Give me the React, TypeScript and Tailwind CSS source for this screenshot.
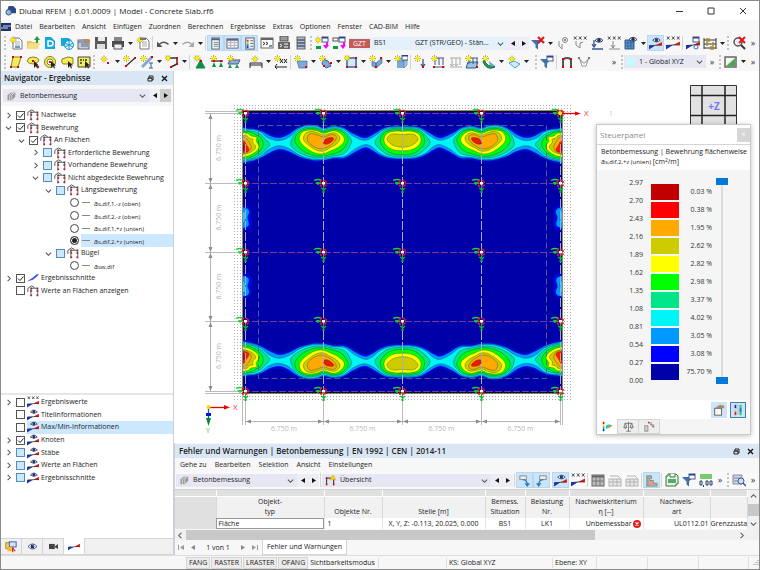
import type { ReactNode } from "react";

type Pt = [number, number];

// ---------- small drawing helpers ----------

function smooth(points: Pt[]) {
  const n = points.length;
  let d = `M${points[0][0]} ${points[0][1]}`;
  for (let i = 0; i < n; i++) {
    const p0 = points[(i - 1 + n) % n];
    const p1 = points[i];
    const p2 = points[(i + 1) % n];
    const p3 = points[(i + 2) % n];
    const c1 = [p1[0] + (p2[0] - p0[0]) / 6, p1[1] + (p2[1] - p0[1]) / 6];
    const c2 = [p2[0] - (p3[0] - p1[0]) / 6, p2[1] - (p3[1] - p1[1]) / 6];
    d += `C${c1[0].toFixed(1)} ${c1[1].toFixed(1)} ${c2[0].toFixed(1)} ${c2[1].toFixed(1)} ${p2[0]} ${p2[1]}`;
  }
  return d + "Z";
}

const Star = ({ x = 3.5, y = 3.5 }: { x?: number; y?: number }) => (
  <g transform={`translate(${x} ${y})`}>
    <path d="M-3.5 0h7M0-3.5v7M-2.3-2.3l4.6 4.6M-2.3 2.3l4.6-4.6" stroke="#a89a20" strokeWidth=".9" />
    <circle r="2" fill="#ffee00" />
  </g>
);

const Dot = ({ x, y, c = "#e00000" }: { x: number; y: number; c?: string }) => (
  <rect x={x - 1} y={y - 1} width="2" height="2" fill={c} />
);

const Eye = ({ x = 8, y = 3 }: { x?: number; y?: number }) => (
  <g transform={`translate(${x} ${y})`}>
    <path d="M-4 .5Q0-4 4 .5Q0 4-4 .5Z" fill="#fff" stroke="#1d2c63" strokeWidth=".9" />
    <circle cy=".3" r="1.7" fill="#1d2c63" />
  </g>
);

const Xxx = ({ y = 3 }: { y?: number }) => (
  <path
    d={`M1 ${y - 1.5}l2.5 3m0-3l-2.5 3M6 ${y - 1.5}l2.5 3m0-3l-2.5 3M11 ${y - 1.5}l2.5 3m0-3l-2.5 3`}
    stroke="#333"
    strokeWidth=".9"
  />
);

const Wedge = () => (
  <>
    <path d="M0 13.500V9L7 9Z" fill="#1733c8" />
    <path d="M7 9L14 5.500V9.500Z" fill="#e02020" />
    <path d="M1 9.500L13 8.500" stroke="#333" strokeWidth=".8" />
  </>
);

const Funnel = ({ c = "#3f6fae" }: { c?: string }) => <path d="M0 4h11L7 8.500v5L4.500 11.500v-3Z" fill={c} />;

const Win = ({ x = 7, y = 1 }: { x?: number; y?: number }) => (
  <>
    <rect x={x} y={y} width="6" height="5" fill="#fff" stroke="#4a5a80" />
    <rect x={x} y={y} width="6" height="1.500" fill="#2a3e9a" />
  </>
);

const Frame = ({ c = "#b02030" }: { c?: string }) => (
  <>
    <path d="M4.500 13V4h8v9" fill="none" stroke="#8a8a8a" strokeWidth="1.500" />
    <path d="M1 4v4M1 4l4-3 4 2" stroke="#444" fill="none" />
    <Dot x={5} y={4} c="#444" />
    <Dot x={12} y={4} c="#444" />
    <Dot x={5} y={7} c={c} />
    <Dot x={12} y={7} c={c} />
    <Dot x={5} y={12} c={c} />
    <Dot x={12} y={12} c={c} />
  </>
);

const Page = () => (
  <>
    <path d="M4 2h6l3 3v8H4Z" fill="#fff" stroke="#777" />
    <path d="M6 6h5M6 8h5M6 10h5" stroke="#aaa" />
  </>
);

const Poly = ({ d }: { d: string }) => <path d={d} fill="#f3ec5c" stroke="#8b8419" />;

const Cursor = () => <path d="M8 6v7l2-2 1 2.500 1-.5-1-2.500h2Z" fill="#222" />;

const glyphs: Record<string, ReactNode> = {
  new: (<><Page /><Star x={4} y={4} /><path d="M6 10h5v2H6z" fill="#6a9bc8" /></>),
  open: (<><path d="M1 5h4l1 1h6v7H1Z" fill="#e5c55d" /><path d="M1 13l2-6h11l-2 6Z" fill="#f5dd87" /><path d="M10 7V4H8l3-4 3 4h-2v3Z" fill="#249b35" /></>),
  dCloud: (<><path d="M2 1h6l4 4v8H2Z" fill="#12a8dc" /><path d="M5 5h2q3 0 3 2.500T7 10H5Z" fill="none" stroke="#fff" strokeWidth="1.500" /></>),
  dCube: (<><path d="M1 2h7q4 1 4 5v3H1Z" fill="#12a8dc" /><circle cx="9" cy="9" r="4.500" fill="#dff4fc" stroke="#1598cc" /><path d="M9 5v8M5 7l8 4M5 11l8-4" stroke="#1598cc" /></>),
  props: (<><rect x="1" y="4" width="11" height="9" fill="#c8cfd8" stroke="#667" /><path d="M1 6h11M4 8h7M4 10h7" stroke="#556b8c" /><path d="M6 3h5l2 1v3H9Z" fill="#b78a5c" /></>),
  save: (<><path d="M1 1h12v12H1Z" fill="#5a5a5a" /><rect x="4" y="1" width="7" height="4" fill="#eee" /><rect x="3" y="8" width="8" height="5" fill="#ddd" /></>),
  print: (<><rect x="3" y="1" width="8" height="4" fill="#888" /><path d="M1 5h12v6H1Z" fill="#4c4c4c" /><rect x="3" y="8" width="8" height="5" fill="#eee" stroke="#555" /></>),
  report: (<><Page /><Star x={4} y={4} /><path d="M4 2h6v2H4z" fill="#777" /></>),
  undo: (<><path d="M3 8.500Q7.500 4 12.500 8.500" fill="none" stroke="#555" strokeWidth="1.600" /><path d="M1 5.500V11h5.500Z" fill="#555" /></>),
  redo: (<><path d="M11 8.500Q6.500 4 1.500 8.500" fill="none" stroke="#aaa" strokeWidth="1.400" /><path d="M13 5.500V11H7.500Z" fill="#aaa" /></>),
  navTable: (<><rect x="3" y="1" width="8" height="12" fill="#f4f4f4" stroke="#55606e" /><path d="M3 2.500h8" stroke="#55606e" strokeWidth="2" /><path d="M5 6h5M5 8h5M5 10h5" stroke="#6b87ad" /></>),
  grid: (<><rect x="1" y="2" width="12" height="10" fill="#f4f4f4" stroke="#667" /><path d="M1 3h12" stroke="#667" strokeWidth="2" /><path d="M1 6h12M1 9h12M5 4v8M9 4v8" stroke="#b0b4bc" /></>),
  legend: (<><rect x="3" y="1" width="9" height="12" fill="#f1f1f1" stroke="#55606e" /><path d="M5 3v2" stroke="#e22" strokeWidth="2" /><path d="M5 5v2" stroke="#fb3" strokeWidth="2" /><path d="M5 7v2" stroke="#2c3" strokeWidth="2" /><path d="M5 9v3" stroke="#23e" strokeWidth="2" /><path d="M8 4h3M8 7h3M8 10h3" stroke="#3a68a8" /></>),
  console: (<><rect x="1" y="2" width="12" height="10" fill="#fff" stroke="#666" /><path d="M1 3h12" stroke="#666" strokeWidth="2" /><path d="M3 6l2 1.500L3 9M6 6l2 1.500L6 9M9 10h3" fill="none" stroke="#222" /></>),
  script: (<><rect x="3" y="0" width="8" height="5" fill="#999" stroke="#555" /><rect x="1" y="6" width="12" height="7" fill="#666" /><path d="M3 8l2 1.500L3 11M7 8h4M7 11h4" stroke="#fff" fill="none" /></>),
  panel: (<><rect x="3" y="1" width="8" height="12" fill="#aebfd4" stroke="#666" /><path d="M3 4h8M3 7h8M3 10h8" stroke="#556" strokeWidth="1.500" /></>),
  swapNew: (<><path d="M1 10h5v3H1z" fill="#0a9b3c" /><Win x={7} y={1} /><Star x={3} y={4} /><path d="M12 6v4" stroke="#f0f" strokeWidth="2" /><path d="M8 9h6l-3 4Z" fill="#f0f" /></>),
  swap: (<><rect x="1" y="2" width="5" height="3" fill="#fff" stroke="#555" /><path d="M1 10h5v3H1z" fill="#0a9b3c" /><Win x={7} y={1} /><path d="M12 6v4" stroke="#f0f" strokeWidth="2" /><path d="M8 9h6l-3 4Z" fill="#f0f" /></>),
  filterX: (<><Funnel /><path d="M7 1l6 6m0-6L7 7" stroke="#e01818" strokeWidth="2.200" /></>),
  ptEye: (<><path d="M3 5v5l3 3V8" fill="none" stroke="#888" /><circle cx="9" cy="4" r="2.500" fill="none" stroke="#888" /><circle cx="9" cy="4" r="1" fill="#666" /></>),
  ptXxx: (<><Xxx y={2} /><path d="M3 5v4l4 3V7l3-1" fill="none" stroke="#888" /></>),
  loadEye: (<><path d="M2 13h11" stroke="#35588e" strokeWidth="1.500" /><path d="M4 4v7M2 8l2 3 2-3" fill="none" stroke="#35588e" strokeWidth="1.300" /><Eye x={9} y={4} /></>),
  loadXxx: (<><Xxx y={2} /><path d="M2 13h11M6 5v7M4 9l2 3 2-3" fill="none" stroke="#888" /></>),
  meshEye: (<><path d="M1 4h9v9H1z" fill="#5e94cc" stroke="#2d5790" /><path d="M1 7h9M1 10h9M4 4v9M7 4v9" stroke="#2d5790" strokeWidth=".7" /><Eye x={9} /></>),
  resEye: (<><Wedge /><Eye x={8} /></>),
  resXxx: (<><Wedge /><Xxx y={2} /></>),
  resWin: (<><Wedge /><Win /><circle cx="10" cy="11" r="2" fill="#fff" stroke="#36c" /></>),
  res: (<><path d="M0 12V8L7 8Z" fill="#1733c8" /><path d="M7 8L14 4.500V8.500Z" fill="#e02020" /><path d="M1 8.500L13 7.500" stroke="#333" strokeWidth=".7" /></>),
  abacus: (<><path d="M1 2v11M13 2v11M1 4h12M1 8h12M1 12h12" stroke="#333" /><path d="M4 2v4M6 2v4M4 6v4M10 6v4M8 10v4M10 10v4" stroke="#a88a2a" strokeWidth="1.500" /></>),
  searchX: (<><circle cx="6" cy="6" r="4" fill="#eef" stroke="#555" strokeWidth="1.500" /><path d="M9 9l4 4" stroke="#333" strokeWidth="2" /><path d="M7 1l6 6m0-6L7 7" stroke="#e01818" strokeWidth="2" /></>),
  poly1: (<><Poly d="M4 2h8L9 12H2Z" /><Dot x={4} y={2} /><Dot x={12} y={2} /><Dot x={2} y={12} /><Dot x={9} y={12} /></>),
  poly2: (<><Poly d="M1 6q1-4 6-4t6 3q0 3-6 4q-4 0-6-3Z" /><Dot x={7} y={6} /><Cursor /><Dot x={12} y={12} /></>),
  poly3: (<><circle cx="7" cy="7" r="5.500" fill="#f3ec5c" stroke="#8b8419" /><circle cx="7" cy="7" r="3" fill="#fff" stroke="#8b8419" /><Dot x={7} y={7} /><Cursor /></>),
  poly4: (<><Poly d="M2 4l6-2 5 1v6H3Q1 8 2 4Z" /><Cursor /></>),
  poly5: (<><path d="M1 2h12v10H1Z" fill="#f3ec5c" stroke="#444" /><path d="M3 5h4M3 8h3M9 4v3" stroke="#333" strokeWidth="1.500" strokeDasharray="2 1" /><Cursor /></>),
  node: (<><Star x={6} y={4} /><Dot x={10} y={8} /></>),
  line: (<><path d="M3 11L12 3" stroke="#333" strokeWidth="1.300" /><Star /><Dot x={3} y={11} /><Dot x={12} y={3} /></>),
  member: (<><path d="M2 12L12 2" stroke="#88a8d0" strokeWidth="3" /><Star /><Dot x={12} y={2} /><path d="M9 8h4M11 8v5M9 13h4" stroke="#3960a0" /></>),
  polyline: (<><path d="M4 3h8v6l-6 3" fill="none" stroke="#333" strokeWidth="1.500" /><Star x={3} y={3} /><Dot x={12} y={3} /><Dot x={12} y={9} /><Dot x={6} y={12} /></>),
  support: (<><path d="M7 4v6M7 6l-4 7h9l-4-7Z" fill="#0b9044" stroke="#0b9044" /><Star x={4} y={3} /><Dot x={8} y={6} /></>),
  lineSup: (<><path d="M1 6h12" stroke="#333" strokeWidth="1.300" /><path d="M4 7l-2 5h4ZM11 7l-2 5h4Z" fill="#0b9044" /><Star /><Dot x={4} y={6} /><Dot x={11} y={6} /></>),
  surfSup: (<><path d="M3 5h10l-2 4H1Z" fill="#88b2d8" stroke="#557" /><path d="M3 9l-2 4h4ZM10 9l-2 4h4Z" fill="#1a9b52" /><Star /></>),
  dim: (<><path d="M1 13V8h12v5M1 10h12" fill="none" stroke="#222" /><Star x={6} y={4} /></>),
  dimXx: (<><path d="M1 12h12M3 9l-2 3 2 2" fill="none" stroke="#222" /><Star /><path d="M6 4l3 4m0-4L6 8M10 4l3 4m0-4l-3 4" stroke="#222" /></>),
  surface: (<><path d="M3 6h10v7H5Z" fill="#7daad6" stroke="#3a628e" strokeWidth=".6" /><Star /><Dot x={12} y={12} /></>),
  opening: (<><path d="M4 4l5 2 3 5-5 2-4-4Z" fill="#7daad6" stroke="#3a628e" /><Star /><Dot x={12} y={8} /><Dot x={5} y={11} /></>),
  openRect: (<><path d="M3 3h9v9H3Z" fill="#d5e6f6" stroke="#5b8ab8" strokeWidth="2" /><Star x={3} y={3} /><Dot x={12} y={3} /><Dot x={3} y={12} /><Dot x={12} y={12} /></>),
  solid: (<><path d="M3 6l4 2v5l-4-2ZM7 8l6-5v5l-6 5Z" fill="#78a6d4" stroke="#315c8c" strokeWidth=".6" /><Star /><Dot x={12} y={3} /><Dot x={7} y={12} /></>),
  cube: (<><path d="M3 6h7v7H3Z" fill="#7daad6" /><path d="M3 6l2-3h8l-3 3ZM10 6l3-3v7l-3 3Z" fill="#a6c8e8" stroke="#315c8c" strokeWidth=".5" /><Star /><Win x={8} y={0} /></>),
  load: (<><Star /><path d="M9 4v8M7 9l2 3 2-3" stroke="#35588e" fill="none" strokeWidth="1.300" /><Dot x={9} y={12} /></>),
  lineLoad: (<><path d="M2 3h11M4 3v7M8 3v7M12 3v7M2 12h12" stroke="#35588e" fill="none" /><Star /><Dot x={3} y={12} /><Dot x={12} y={12} /></>),
  lineLoadOff: <path d="M2 3h11M4 3v7M8 3v7M12 3v7M2 12h12M2 9l2 2 2-2M7 9l1 2 2-2" stroke="#aaa" fill="none" />,
  surfLoad: (<><path d="M3 7h10l-2 6H1Z" fill="#9cc2e6" stroke="#315c8c" /><path d="M4 3v6M8 3v6M12 3v6M3 3h10" stroke="#315c8c" /><Star /><Dot x={12} y={12} /></>),
  brush: (<><path d="M2 5q4 8 9 5l2 2q-8 4-12-5Z" fill="#28a05a" stroke="#17683a" /><path d="M7 6l6 5H8Z" fill="#6fa0d8" /><Star /></>),
  lamp: (<><path d="M2 8l5-2 6 3-5 4Z" fill="#d6ecfb" stroke="#3fa0d8" /><Star x={5} y={4} /></>),
  filterWin: (<><Funnel /><Win /></>),
  arch: (<><path d="M3 13V6q0-3 4-3t4 3v7" fill="none" stroke="#555" strokeWidth="2" /><Dot x={3} y={12} /><Dot x={11} y={12} /><Dot x={3} y={4} /><Dot x={11} y={4} /></>),
  cable: (<><path d="M2 2l3 9h4l3-9M3 4q4 8 8 0" fill="none" stroke="#999" /><Dot x={2} y={3} c="#777" /><Dot x={12} y={3} c="#777" /></>),
  plane: (<><rect x="1" y="2" width="11" height="10" fill="#f8f8f8" stroke="#666" strokeWidth="1.500" /><path d="M2 11L11 3v8Z" fill="#48a848" /><path d="M2 11L11 3" stroke="#b5e0b5" /></>),
  frame: <Frame />,
  cut: <path d="M0 11L6 7l5-4 3-1-2 3-5 4Z" fill="#3d56f0" />,
  steel: (<><path d="M2 6l5-4h6v6l-5 5H2Z" fill="#999" /><path d="M5 13V6l5-4M8 12V6l4-4" stroke="#eee" /></>),
  overview: (<><path d="M2 13V4h9v9" fill="none" stroke="#445" strokeWidth="1.500" /><Dot x={2} y={4} /><Dot x={2} y={12} /><Dot x={11} y={12} /><path d="M10 0l4 6H6Z" fill="#ffd11a" stroke="#b88e00" strokeWidth=".5" /></>),
  navData: (<><rect x="1" y="2" width="9" height="7" fill="#f6d25c" stroke="#a87c10" /><rect x="5" y="1" width="8" height="6" fill="#cfe2ff" stroke="#2850b0" /><path d="M3 7h7v5H3Z" fill="#f3be2e" /><path d="M9 13V8l3 4" stroke="#d22" fill="none" strokeWidth="1.300" /></>),
  eye: (<><path d="M0 7Q7-1 14 7Q7 15 0 7Z" fill="#fff" stroke="#1d2c63" strokeWidth="1.200" /><circle cx="7" cy="7" r="3" fill="#1d2c63" /><circle cx="8" cy="6" r="1" fill="#8ea2dc" /></>),
  camera: (<><rect x="0" y="3" width="9" height="8" fill="#444" /><path d="M9 7l5-4v8L9 8Z" fill="#444" /></>),
  arrowDown: (<><rect x="2" y="2" width="7" height="4" fill="#eee" stroke="#8a8a8a" /><path d="M5 6q5 0 5 6" fill="none" stroke="#2d7db8" strokeWidth="1.500" /><path d="M7 10h6l-3 4Z" fill="#2d7db8" /></>),
  arrowUp: (<><rect x="5" y="2" width="7" height="4" fill="#eee" stroke="#8a8a8a" /><path d="M9 6Q4 6 4 12" fill="none" stroke="#2d7db8" strokeWidth="1.500" /><path d="M1 10h6l-3 4Z" fill="#2d7db8" /></>),
  tableDark: (<><rect x="1" y="2" width="12" height="11" fill="#bbb" stroke="#666" /><path d="M1 3.500h12" stroke="#666" strokeWidth="2" /><path d="M1 8h12M5 5v8M9 5v8" stroke="#777" /></>),
  tableOff: (<><rect x="1" y="6" width="12" height="7" fill="#e8e8e8" stroke="#b2b2b2" /><path d="M1 9h12M5 6v7M9 6v7M2 3h8l2 2" stroke="#b2b2b2" fill="none" /></>),
  bars: (<><path d="M3 2h4v3H5v2h4v3h4v3H3Z" fill="#e49b9b" stroke="#6d9a86" /><path d="M2 1v13" stroke="#7fa596" strokeWidth="1.500" /></>),
  excel: (<><path d="M3 1h8l2 2v8h-2v2H1V3h2Z" fill="#e8f3e8" stroke="#2b7a3b" /><path d="M3 6h8v4H3z" fill="#5ba86a" /><path d="M5 1v3h5V1" fill="#fff" stroke="#2b7a3b" /></>),
  decimals: (<><path d="M1 1h12v5H1z" fill="#7bc96f" /><path d="M1 8h2v4H1zM7 8h2v4H7zM11 8h2v4h-2z" fill="none" stroke="#223a6a" /><path d="M4.500 12v2" stroke="#223a6a" /></>),
  find: (<><path d="M1 2h9v9H1z" fill="#d5dae2" stroke="#888" /><path d="M2 5h7M2 8h5" stroke="#6a86b0" /><circle cx="9" cy="8" r="3" fill="#cfe0f8" stroke="#3a5890" /><path d="M11 10l3 3" stroke="#3a5890" strokeWidth="1.500" /></>),
  scaleTab: (<><path d="M2 1v3" stroke="#e00" strokeWidth="2" /><path d="M2 4v3" stroke="#fc0" strokeWidth="2" /><path d="M2 7v3" stroke="#0c4" strokeWidth="2" /><path d="M2 10v3" stroke="#03e" strokeWidth="2" /><path d="M5 10V6q4-3 8 0l-4 3Z" fill="#0cd" /><path d="M6 8q4-3 7-2l-4 3Z" fill="#f90" /></>),
  balance: <path d="M7 1v12M2 3h10M3 3L1 8h4ZM11 3L9 8h4ZM1 8q2 3 4 0M9 8q2 3 4 0M4 13h6" fill="none" stroke="#666" />,
  nodeTab: (<><rect x="1" y="6" width="4" height="7" fill="#ccc" stroke="#888" /><path d="M6 2l6 6M9 1v4h4" stroke="#777" fill="none" /><Dot x={6} y={2} c="#d22" /><Dot x={12} y={7} c="#c55" /></>),
  handBox: (<><rect x="2" y="5" width="8" height="8" fill="#fafafa" stroke="#555" /><path d="M3 4l5-3 5 1v3H4Z" fill="#a88b6c" /></>),
  scales: (<><path d="M4 1v4" stroke="#22d" strokeWidth="2" /><path d="M4 5v4" stroke="#ccc" strokeWidth="2" /><path d="M4 9v4" stroke="#d22" strokeWidth="2" /><path d="M10 1v12" stroke="#2ad07a" strokeWidth="2.500" /><path d="M10 5v4" stroke="#3a6de0" strokeWidth="2" /><path d="M7 1v12" stroke="#89a" strokeDasharray="1 1" /></>),
};

const Glyph = ({ name, size = "size-[14px]" }: { name: string; size?: string }) => (
  <svg viewBox="0 0 14 14" className={`${size} shrink-0`} fill="none" aria-hidden="true">
    {glyphs[name]}
  </svg>
);

// ---------- toolbar parts ----------

const Tool = ({ name, on }: { name: string; on?: boolean }) => (
  <button
    aria-label={name}
    aria-pressed={on}
    className={`flex h-4 w-[17px] shrink-0 items-center justify-center ${on ? "border border-[#b5d7f2] bg-[#cce4f7]" : ""}`}
  >
    <Glyph name={name} size={on ? "size-[13px]" : "size-[14px]"} />
  </button>
);

const Caret = () => (
  <button aria-label="Mehr" className="flex w-2 shrink-0 items-center justify-center">
    <svg viewBox="0 0 5 3" className="h-[3px] w-[5px]"><path d="M0 0h5L2.500 3Z" fill="#222" /></svg>
  </button>
);

const Sep = () => <span className="mx-px h-[14px] w-px shrink-0 bg-[#d4d4d4]" />;
const Grip = () => <span className="mx-px h-[14px] shrink-0 border-l-2 border-dotted border-[#c4c4c4]" />;
const More = () => <button aria-label="Weitere" className="w-3 shrink-0 text-center text-[9px] leading-3 text-[#333]">»</button>;

const Step = ({ dir, shade }: { dir: "l" | "r"; shade?: boolean }) => (
  <button
    aria-label={dir === "l" ? "Zurück" : "Weiter"}
    className={`flex h-[13px] w-[11px] shrink-0 items-center justify-center ${shade ? "bg-[#cdcdcd]" : "bg-[#ededf5]"}`}
  >
    <svg viewBox="0 0 4 5" className="h-[5px] w-1">
      <path d={dir === "l" ? "M4 0v5L0 2.500Z" : "M0 0v5L4 2.500Z"} fill="#111" />
    </svg>
  </button>
);

const Chevron = ({ dir = "down", className = "" }: { dir?: "down" | "right" | "left" | "up"; className?: string }) => {
  const d = { down: "M1 3l3 3 3-3", right: "M3 1l3 3-3 3", left: "M5 1L2 4l3 3", up: "M1 5l3-3 3 3" }[dir];
  return (
    <svg viewBox="0 0 8 8" className={`size-[7px] shrink-0 ${className}`} fill="none">
      <path d={d} stroke="#555" strokeWidth="1.200" />
    </svg>
  );
};

const Combo = ({ label, value, children, className = "" }: { label: string; value: string; children?: ReactNode; className?: string }) => (
  <div className={`flex h-[13px] min-w-0 items-center gap-1 px-[3px] ${className}`}>
    {children}
    <select aria-label={label} className="min-w-0 flex-1 appearance-none truncate bg-transparent outline-none">
      <option>{value}</option>
    </select>
    <Chevron />
  </div>
);

// ---------- navigator ----------

type Node = { text: string; depth: number; icon: string; open?: boolean; state?: "on" | "off" | "part"; radio?: boolean; active?: boolean };

const results: Node[] = [
  { text: "Nachweise", depth: 0, icon: "frame", open: false, state: "on" },
  { text: "Bewehrung", depth: 0, icon: "frame", open: true, state: "on" },
  { text: "An Flächen", depth: 1, icon: "frame", open: true, state: "on" },
  { text: "Erforderliche Bewehrung", depth: 2, icon: "frame", open: false, state: "part" },
  { text: "Vorhandene Bewehrung", depth: 2, icon: "frame", open: false, state: "part" },
  { text: "Nicht abgedeckte Bewehrung", depth: 2, icon: "frame", open: true, state: "part" },
  { text: "Längsbewehrung", depth: 3, icon: "frame", open: true, state: "part" },
  { text: "s,dif,1,-z (oben)", depth: 4, icon: "", radio: true },
  { text: "s,dif,2,-z (oben)", depth: 4, icon: "", radio: true },
  { text: "s,dif,1,+z (unten)", depth: 4, icon: "", radio: true },
  { text: "s,dif,2,+z (unten)", depth: 4, icon: "", radio: true, active: true },
  { text: "Bügel", depth: 3, icon: "frame", open: true, state: "part" },
  { text: "sw,dif", depth: 4, icon: "", radio: true },
  { text: "Ergebnisschnitte", depth: 0, icon: "cut", open: false, state: "on" },
  { text: "Werte an Flächen anzeigen", depth: 0, icon: "frame", state: "off" },
];

const display: Node[] = [
  { text: "Ergebniswerte", depth: 0, icon: "resXxx", open: false, state: "off" },
  { text: "Titelinformationen", depth: 0, icon: "resEye", state: "off" },
  { text: "Max/Min-Informationen", depth: 0, icon: "resEye", state: "off", active: true },
  { text: "Knoten", depth: 0, icon: "resEye", open: false, state: "on" },
  { text: "Stäbe", depth: 0, icon: "resEye", open: false, state: "part" },
  { text: "Werte an Flächen", depth: 0, icon: "resEye", open: false, state: "part" },
  { text: "Ergebnisschnitte", depth: 0, icon: "resEye", open: false, state: "part" },
];

const indent = ["pl-1", "pl-[17px]", "pl-[31px]", "pl-[44px]", "pl-[58px]"];

function TreeRow({ node }: { node: Node }) {
  return (
    <div className={`flex min-h-0 flex-1 items-center ${indent[node.depth]}`}>
      <span className="flex w-[11px] shrink-0 items-center">
        {node.open !== undefined && <Chevron dir={node.open ? "down" : "right"} />}
      </span>
      <label className="flex min-w-0 flex-1 items-center self-stretch">
        {node.radio ? (
          <input
            type="radio"
            name="value"
            defaultChecked={node.active}
            className="size-[9px] shrink-0 appearance-none rounded-full border border-[#444] bg-white checked:bg-[#222] checked:shadow-[inset_0_0_0_1px_#fff]"
          />
        ) : (
          <span className="grid shrink-0">
            <input
              type="checkbox"
              defaultChecked={node.state === "on"}
              className={`peer col-start-1 row-start-1 size-[9px] appearance-none border ${node.state === "part" ? "border-[#4f8fc0] bg-[#cce8ff]" : "border-[#555] bg-white"}`}
            />
            <svg viewBox="0 0 9 9" className="pointer-events-none invisible col-start-1 row-start-1 size-[9px] peer-checked:visible" fill="none">
              <path d="M2 4.500l2 2 3.500-4" stroke="#222" />
            </svg>
          </span>
        )}
        <span className={`ml-[2px] flex flex-1 items-center self-stretch whitespace-nowrap ${node.active ? "bg-[#cce8ff]" : ""}`}>
          {node.radio ? (
            <>
              <span className="mr-1 ml-px h-px w-2 bg-[#888]" />
              <span className="pt-[2px] font-medium">a<span className="text-[6px]">{node.text}</span></span>
            </>
          ) : (
            <>
              <Glyph name={node.icon} size="mr-[2px] size-[12px]" />
              {node.text}
            </>
          )}
        </span>
      </label>
    </div>
  );
}

const WindowButtons = () => (
  <span className="flex items-center gap-[7px]">
    <button aria-label="Lösen">
      <svg viewBox="0 0 7 7" className="block size-[7px]" fill="none"><path d="M2 2V1h4v4H5M1 3h4v3H1ZM1 3h4" stroke="#222" /></svg>
    </button>
    <button aria-label="Schließen">
      <svg viewBox="0 0 7 7" className="block size-[7px]"><path d="M1 1l5 5M6 1L1 6" stroke="#111" strokeWidth="1.300" /></svg>
    </button>
  </span>
);

function Navigator() {
  return (
    <aside className="flex w-[173px] shrink-0 flex-col border-r border-[#cfcfd8] bg-white">
      <header className="flex h-[14px] items-center justify-between bg-[#d9e6f3] pr-[5px] pl-[3px] text-[8px] font-semibold">
        <h2>Navigator - Ergebnisse</h2>
        <WindowButtons />
      </header>
      <div className="flex h-[21px] items-center bg-[#f7f7f7] px-[2px]">
        <Combo label="Modul" value="Betonbemessung" className="flex-1 bg-[#e7e7f4]">
          <Glyph name="steel" size="size-[10px]" />
        </Combo>
        <Step dir="l" />
        <Step dir="r" shade />
      </div>
      <div className="mt-[3px] flex h-[188px] flex-col">
        {results.map((n, i) => <TreeRow key={i} node={n} />)}
      </div>
      <div className="flex-1" />
      <div className="flex h-[91px] flex-col border-t-2 border-[#e6e6e6] pt-px">
        {display.map((n, i) => <TreeRow key={i} node={n} />)}
      </div>
      <div className="mt-[54px] flex h-[17px] border-y border-[#d5d5d5] bg-[#f0f0f0]">
        {["navData", "eye", "camera", "res"].map((n) => (
          <button
            key={n}
            aria-label={n}
            className={`flex w-[21px] items-center justify-center border-r border-[#d5d5d5] ${n === "res" ? "-mt-px bg-white" : ""}`}
          >
            <Glyph name={n} size={n === "eye" || n === "camera" ? "size-[9px]" : "size-[12px]"} />
          </button>
        ))}
      </div>
    </aside>
  );
}

// ---------- model view ----------

// Outlines of one quarter of the slab; the other three are mirrored.
const contours: { fill: string; pts: Pt[] }[] = [
  { fill: "#0000ff", pts: [[100, 100], [150, 97], [185, 103], [210, 116], [237, 121], [264, 112], [290, 96], [320, 86], [348, 87], [371, 95], [400, 89], [430, 94], [456, 108], [494, 122], [525, 109], [555, 94], [590, 89], [625, 92], [680, 110], [680, 180], [610, 196], [570, 195], [540, 186], [515, 171], [494, 165], [465, 178], [435, 194], [400, 195], [371, 201], [335, 200], [300, 191], [265, 175], [237, 169], [210, 179], [185, 192], [150, 204], [100, 204]] },
  { fill: "#0099ff", pts: [[100, 106], [150, 101], [185, 109], [210, 122], [237, 128], [264, 119], [290, 101], [320, 90], [348, 91], [371, 99], [400, 93], [430, 98], [456, 114], [494, 129], [525, 115], [555, 98], [590, 94], [625, 96], [680, 110], [680, 180], [610, 191], [570, 190], [540, 180], [515, 165], [494, 158], [465, 171], [435, 188], [400, 190], [371, 196], [335, 195], [300, 186], [265, 169], [237, 163], [210, 173], [185, 187], [150, 199], [100, 199]] },
  { fill: "#00f6f6", pts: [[100, 108], [150, 104], [180, 110], [205, 129], [237, 137], [268, 126], [292, 104], [320, 93], [348, 94], [371, 102], [400, 96], [430, 102], [460, 124], [494, 136], [525, 123], [555, 102], [590, 97], [625, 99], [680, 110], [680, 180], [610, 188], [570, 187], [540, 175], [515, 155], [494, 149], [462, 164], [435, 184], [400, 187], [371, 192], [335, 192], [300, 181], [268, 161], [237, 152], [207, 163], [182, 183], [150, 195], [100, 196]] },
  { fill: "#00e588", pts: [[100, 111], [150, 108], [178, 116], [198, 134], [209, 149], [196, 165], [175, 182], [150, 192], [100, 193]] },
  { fill: "#00e588", pts: [[272, 145], [280, 122], [295, 107], [320, 97], [348, 98], [371, 106], [400, 99], [430, 107], [453, 132], [452, 148], [434, 175], [400, 183], [371, 188], [335, 187], [300, 174], [278, 158]] },
  { fill: "#00e588", pts: [[525, 143], [540, 119], [560, 104], [590, 100], [625, 102], [680, 112], [680, 178], [610, 184], [570, 182], [545, 167]] },
  { fill: "#00ff00", pts: [[100, 115], [145, 110], [165, 118], [182, 128], [190, 148], [180, 168], [160, 183], [140, 189], [100, 190]] },
  { fill: "#00ff00", pts: [[285, 139], [293, 115], [320, 101], [348, 102], [371, 110], [400, 103], [425, 109], [444, 130], [440, 147], [424, 167], [398, 177], [371, 183], [340, 181], [305, 165]] },
  { fill: "#00ff00", pts: [[541, 139], [550, 115], [575, 105], [607, 105], [650, 107], [680, 120], [680, 170], [610, 179], [575, 175], [553, 160]] },
  { fill: "#ffff00", pts: [[100, 120], [138, 114], [154, 123], [170, 126], [169, 139], [177, 153], [171, 167], [155, 178], [138, 184], [100, 186]] },
  { fill: "#ffff00", pts: [[298, 134], [306, 112], [328, 105], [350, 107], [371, 115], [400, 107], [421, 115], [433, 131], [428, 146], [410, 160], [391, 168], [371, 176], [345, 174], [315, 156]] },
  { fill: "#ffff00", pts: [[552, 135], [560, 116], [582, 109], [607, 109], [650, 112], [670, 125], [660, 160], [610, 167], [580, 164], [560, 152]] },
  { fill: "#cccc00", pts: [[100, 127], [136, 121], [149, 130], [159, 133], [158, 142], [167, 155], [158, 168], [136, 177], [100, 179]] },
  { fill: "#cccc00", pts: [[310, 133], [317, 115], [334, 109], [351, 113], [371, 120], [400, 113], [415, 120], [420, 132], [410, 147], [391, 158], [371, 168], [350, 166], [326, 151]] },
  { fill: "#cccc00", pts: [[561, 134], [571, 119], [590, 117], [607, 119], [640, 118], [650, 135], [635, 153], [607, 157], [580, 151]] },
  { fill: "#ffaa00", pts: [[100, 132], [132, 126], [145, 138], [154, 155], [148, 168], [135, 175], [100, 175]] },
  { fill: "#ffaa00", pts: [[322, 134], [329, 117], [346, 118], [371, 126], [392, 119], [407, 122], [407, 135], [394, 149], [371, 161], [350, 159], [333, 149]] },
  { fill: "#ff1a00", pts: [[100, 143], [130, 137], [138, 148], [147, 164], [136, 172], [100, 172]] },
  { fill: "#e81c00", pts: [[370, 145], [378, 131], [399, 128], [398, 137], [383, 147]] },
  { fill: "#c00000", pts: [[100, 150], [128, 145], [133, 155], [129, 168], [100, 168]] },
];

const sideSpot: { fill: string; pts: Pt[] }[] = [
  { fill: "#0000ff", pts: [[110, 336], [140, 332], [155, 350], [152, 368], [156, 386], [145, 404], [110, 404]] },
  { fill: "#0099ff", pts: [[110, 344], [138, 339], [148, 351], [143, 368], [147, 388], [138, 397], [110, 397]] },
  { fill: "#20c8ff", pts: [[110, 353], [133, 350], [137, 360], [132, 383], [110, 390]] },
];

const colX = [245, 323, 402, 481, 560];
const rowY = [113, 183, 252, 321, 391];

const Dimension = ({ horizontal, a, b }: { horizontal?: boolean; a: number; b: number }) => {
  const mid = (a + b) / 2;
  if (horizontal)
    return (
      <g>
        <path d={`M${a} 421.500H${b}`} stroke="#b4b4b4" />
        <path d={`M${a + 1} 421.500l5-2v4ZM${b} 421.500l-5-2v4Z`} fill="#8c8c8c" />
        <text x={mid} y="431" fontSize="7" fill="#b8b8b8" textAnchor="middle">6.750 m</text>
      </g>
    );
  return (
    <g>
      <path d={`M210.500 ${a}V${b}`} stroke="#b4b4b4" />
      <path d={`M210.500 ${a + 1}l-2 5h4ZM210.500 ${b}l-2-5h4Z`} fill="#8c8c8c" />
      <text transform={`translate(221 ${mid}) rotate(-90)`} fontSize="7" fill="#b8b8b8" textAnchor="middle">6.750 m</text>
    </g>
  );
};

const Support = ({ x, y }: { x: number; y: number }) => (
  <g transform={`translate(${x} ${y})`}>
    <path d="M-9-2.500q4-2 8 0M-7 0h5M-5-1v3" stroke="#12d832" fill="none" strokeWidth="1.300" />
    <path d="M.5 3v7M-2 5l3 2 2-2M-1 9h3" stroke="#10b82c" fill="none" strokeWidth="1.200" />
    <path d="M-3-2.500h6.500M-3 3h6.500M-2.500-2v5M3-2v5" stroke="#e81818" strokeWidth="1.600" strokeDasharray="2 1.500" />
    <path d="M-1-1h3v2.500h-3z" fill="#eef5e0" />
  </g>
);

function ModelView() {
  const mirrors = ["", "translate(805 0) scale(-1 1)", "translate(0 504) scale(1 -1)", "translate(805 504) scale(-1 -1)"];
  return (
    <svg viewBox="174 71 585 372" className="block min-h-0 w-full flex-1" fill="none" role="img" aria-label="Modell">
      <defs>
        <pattern id="dots" width="3" height="3" patternUnits="userSpaceOnUse">
          <rect width="1" height="1" fill="#b0b0b0" />
        </pattern>
        <clipPath id="quarter"><rect x="243" y="111" width="160" height="141" /></clipPath>
      </defs>
      <rect x="233" y="103" width="340" height="299" fill="url(#dots)" />
      <rect x="243" y="111" width="319" height="282" fill="#0000a8" stroke="#111" />
      {mirrors.map((m) => (
        <g key={m} transform={m || undefined}>
          <g clipPath="url(#quarter)">
            <g transform="translate(200 95) scale(.3333)">
              {[...contours, ...sideSpot].map((c, i) => (
                <path key={i} d={smooth(c.pts)} fill={c.fill} stroke="#102030" strokeOpacity=".65" strokeWidth="1.500" />
              ))}
            </g>
          </g>
        </g>
      ))}
      <rect x="258.500" y="125.500" width="288" height="253" stroke="#62628c" strokeDasharray="6 3" strokeWidth=".9" />
      {rowY.map((y) => <path key={y} d={`M243 ${y + 0.5}H562`} stroke="#80409a" strokeDasharray="7 2" strokeWidth=".9" />)}
      {colX.map((x) => <path key={x} d={`M${x + 0.5} 111V393`} stroke="#a9a9cc" strokeDasharray="9 2" />)}
      <path d="M243 111.500H562M243 392.500H562" stroke="#111" />

      {rowY.map((y) => <path key={y} d={`M205 ${y + 0.5}H243`} stroke="#bbb" />)}
      <path d="M205 111.500H243M205 393.500H243" stroke="#bbb" />
      {colX.map((x) => <path key={x} d={`M${x + 0.5} 394V425`} stroke="#bbb" />)}
      <path d="M242.500 394V425M562.500 394V425" stroke="#bbb" />
      {rowY.slice(1).map((y, i) => <Dimension key={y} a={rowY[i]} b={y} />)}
      {colX.slice(1).map((x, i) => <Dimension key={x} horizontal a={colX[i]} b={x} />)}
      {rowY.map((y) => colX.map((x) => <Support key={`${x}-${y}`} x={x} y={y} />))}

      {/* global axes */}
      <path d="M562 113.500h13" stroke="#e00" strokeWidth="1.300" />
      <path d="M575 111.500l6 2-6 2Z" fill="#e00" />
      <circle cx="560" cy="113" r="2" fill="#fe0" />
      <text x="584" y="116" fontSize="8" fill="#f33">X</text>
      <text x="609" y="116" fontSize="7" fill="#c4c4c4">1</text>
      <path d="M208 407.500h16" stroke="#e00" strokeWidth="1.300" />
      <path d="M224 405l6 2.500-6 2Z" fill="#e00" />
      <path d="M208.500 408v14" stroke="#06c" strokeWidth="1.300" />
      <path d="M206 413h5v3h-5z" fill="#11c" />
      <path d="M206 418h5l-2.500 8Z" fill="#083" />
      <circle cx="208.500" cy="407" r="2" fill="#fd0" />
      <text x="233" y="410" fontSize="8" fill="#f33">X</text>
      <text x="206" y="433" fontSize="7" fill="#3c3">Y</text>

      {/* view cube */}
      <path d="M690.500 85.500h46v46h-46Z" fill="#e2e2e2" stroke="#333" />
      <path d="M702 85v46M725 85v46M690 95.500h46M690 115.500h46" stroke="#222" strokeWidth="1.500" />
      <text x="714" y="110" fontSize="10" fontWeight="700" fill="#7878ee" textAnchor="middle">+Z</text>
    </svg>
  );
}

// ---------- control panel ----------

const scale = ["2.97", "2.70", "2.43", "2.16", "1.89", "1.62", "1.35", "1.08", "0.81", "0.54", "0.27", "0.00"];
const bands = [
  ["#c00000", "0.03 %"],
  ["#ff0000", "0.38 %"],
  ["#ffaa00", "1.95 %"],
  ["#cccc00", "2.62 %"],
  ["#ffff00", "2.82 %"],
  ["#00ff00", "2.98 %"],
  ["#00e588", "3.37 %"],
  ["#00f6f6", "4.02 %"],
  ["#0099ff", "3.05 %"],
  ["#0000ff", "3.08 %"],
  ["#0000a8", "75.70 %"],
];

const RangeEnd = ({ label, value }: { label: string; value: number }) => (
  <input
    type="range"
    aria-label={label}
    defaultValue={value}
    className="pointer-events-none col-start-1 row-start-1 h-full w-3 appearance-none bg-transparent [direction:rtl] [writing-mode:vertical-lr] [&::-webkit-slider-thumb]:pointer-events-auto [&::-webkit-slider-thumb]:h-[7px] [&::-webkit-slider-thumb]:w-3 [&::-webkit-slider-thumb]:appearance-none [&::-webkit-slider-thumb]:bg-[#0078d7]"
  />
);

function ControlPanel() {
  return (
    <section className="absolute top-[53px] right-[8px] w-[155px] border border-[#c8c8d0] bg-white shadow-[0_1px_5px_rgba(0,0,0,0.25)]">
      <header className="flex h-5 items-center justify-between border-b border-[#d4d4dc] pl-[3px] text-[8px] text-[#8c8c8c]">
        <h2>Steuerpanel</h2>
        <button aria-label="Schließen" className="flex h-[14px] w-[13px] items-center justify-center bg-[#d6d6d6] text-[7px] text-white">×</button>
      </header>
      <p className="h-[25px] pt-[2px] pl-1 leading-[10px] font-medium whitespace-nowrap">
        Betonbemessung | Bewehrung flächenweise
        <br />a<span className="text-[6px]">s,dif,2,+z (unten)</span> [cm<sup className="text-[5px]">2</sup>/m]
      </p>
      <div className="flex h-[230px] bg-[#f5f5f5] pt-[4px] text-[#333]">
        <ul className="w-[46px] text-right">
          {scale.map((v) => <li key={v} className="h-[18px] leading-[18px]">{v}</li>)}
        </ul>
        <div className="mt-[9px] ml-[8px] flex-1">
          {bands.map(([color, share]) => (
            <div key={color} className="flex h-[18px] items-center">
              <span className="h-4 w-7" style={{ backgroundColor: color }} />
              <span className="w-[33px] text-right">{share}</span>
            </div>
          ))}
        </div>
        <div className="mt-[4px] mr-[22px] grid h-[206px] w-3 justify-items-center">
          <span className="col-start-1 row-start-1 h-full w-[2px] bg-[#dcdcdc]" />
          <RangeEnd label="Maximum" value={100} />
          <RangeEnd label="Minimum" value={0} />
        </div>
      </div>
      <div className="flex h-[19px] items-center justify-end gap-[3px] pr-1">
        <button aria-label="Optionen" className="flex size-4 items-center justify-center bg-[#cce4f7]">
          <Glyph name="handBox" size="size-[12px]" />
        </button>
        <button aria-label="Skala" className="flex size-4 items-center justify-center border border-[#3a80b8] bg-[#cce4f7]">
          <Glyph name="scales" size="size-[12px]" />
        </button>
      </div>
      <div className="flex h-[15px] bg-[#f5f5f5]">
        {["scaleTab", "balance", "nodeTab"].map((n) => (
          <button
            key={n}
            aria-label={n}
            className={`flex w-[21px] items-center justify-center border-r border-[#d5d5d5] ${n === "scaleTab" ? "bg-white" : "border-y bg-[#eee]"}`}
          >
            <Glyph name={n} size="size-[11px]" />
          </button>
        ))}
      </div>
    </section>
  );
}

// ---------- error table ----------

const columns = [
  ["", "w-[41px]"],
  ["Objekt-\ntyp", "w-[108px]"],
  ["\nObjekte Nr.", "w-[58px]"],
  ["\nStelle [m]", "w-[103px]"],
  ["Bemess.\nSituation", "w-[40px]"],
  ["Belastung\nNr.", "w-[44px]"],
  ["Nachweiskriterium\nη [--]", "w-[74px]"],
  ["Nachweis-\nart", "w-[67px]"],
  ["", ""],
];

function ErrorPanel() {
  return (
    <section className="flex h-[112px] shrink-0 flex-col border-l border-[#cfcfd8] bg-[#f7f7f7]">
      <header className="mt-px flex h-[14px] items-center justify-between bg-[#d9e6f3] pr-[5px] pl-1 text-[8px] font-semibold">
        <h2>Fehler und Warnungen | Betonbemessung | EN 1992 | CEN | 2014-11</h2>
        <WindowButtons />
      </header>
      <nav className="flex h-[13px] items-center gap-2 pl-[5px]">
        {["Gehe zu", "Bearbeiten", "Selektion", "Ansicht", "Einstellungen"].map((m) => <button key={m}>{m}</button>)}
      </nav>
      <div className="flex h-[18px] items-center bg-[#f9f9f9] pl-px">
        <Combo label="Bemessung" value="Betonbemessung" className="w-[121px] bg-[#e7e7f4]">
          <Glyph name="steel" size="size-[10px]" />
        </Combo>
        <Step dir="l" /><Step dir="r" />
        <Sep />
        <Combo label="Ansicht" value="Übersicht" className="flex-1 bg-[#e7e7f4]">
          <Glyph name="overview" size="size-[11px]" />
        </Combo>
        <Step dir="l" /><Step dir="r" />
        <Sep /><Tool name="arrowDown" on /><Tool name="arrowUp" on />
        <span className="w-[2px]" />
        <Tool name="resEye" on /><Tool name="resXxx" />
        <Sep /><Tool name="tableDark" /><Tool name="tableOff" /><Tool name="tableOff" />
        <Sep /><Tool name="bars" on /><Sep /><Tool name="excel" />
        <Tool name="filterWin" /><Tool name="decimals" /><More />
        <Grip /><Tool name="find" /><More />
      </div>
      <div className="flex h-[41px] border-t border-[#d0d0d0]">
        <div className="min-w-0 flex-1 overflow-hidden">
          <table className="w-full table-fixed border-collapse text-center leading-[10px]">
            <thead>
              <tr className="h-[6px]">
                {columns.map(([, w], i) => <th key={i} className={`${w} border-r border-b border-white bg-[#e0e0e0] p-0`} />)}
              </tr>
              <tr className="h-[22px]">
                {columns.map(([name], i) => (
                  <th key={i} className={`border-r border-[#d8d8d8] p-0 font-normal whitespace-pre ${i ? "bg-[#f1f1f1]" : "bg-[#e0e0e0]"}`}>{name}</th>
                ))}
              </tr>
            </thead>
            <tbody>
              <tr className="h-[11px] bg-white whitespace-nowrap [&>td]:border-r [&>td]:border-[#e4e4e4] [&>td]:p-0">
                <td className="bg-[#e0e0e0]" />
                <td className="text-left outline outline-[#999] -outline-offset-1"><span className="pl-[2px]">Fläche</span></td>
                <td className="text-left"><span className="pl-[3px]">1</span></td>
                <td>X, Y, Z: -0.113, 20.025, 0.000</td>
                <td>BS1</td>
                <td>LK1</td>
                <td>
                  <span className="flex items-center justify-end gap-px pr-[2px]">
                    Unbemessbar
                    <svg viewBox="0 0 8 8" className="size-2"><circle cx="4" cy="4" r="4" fill="#e02020" /><path d="M2.500 2.500l3 3m0-3l-3 3" stroke="#fff" strokeWidth="1.300" /></svg>
                  </span>
                </td>
                <td className="text-right"><span className="pr-px">UL0112.01</span></td>
                <td className="text-left">Grenzzusta</td>
              </tr>
            </tbody>
          </table>
        </div>
        <div className="flex w-[11px] flex-col items-center justify-between bg-[#f1f1f1] py-[3px]">
          <Chevron dir="up" />
          <span className="h-[12px] w-full bg-[#c8c8c8]" />
          <Chevron />
        </div>
      </div>
      <div className="flex h-[10px] items-center bg-[#f0f0f0] pr-[14px] pl-[2px]">
        <Chevron dir="left" />
        <span className="ml-[2px] h-full w-[72%] bg-[#c8c8c8]" />
        <Chevron dir="right" className="ml-auto" />
      </div>
      <div className="flex flex-1 items-stretch">
        <div className="flex w-[87px] items-center justify-between pr-1 pl-[3px]">
          <button aria-label="Erste"><svg viewBox="0 0 6 5" className="h-[5px] w-[6px]"><path d="M0 0h1v5H0zM6 0v5L2 2.500Z" fill="#999" /></svg></button>
          <button aria-label="Vorige"><svg viewBox="0 0 4 5" className="h-[5px] w-1"><path d="M4 0v5L0 2.500Z" fill="#888" /></svg></button>
          <span className="px-1">1 von 1</span>
          <button aria-label="Nächste"><svg viewBox="0 0 4 5" className="h-[5px] w-1"><path d="M0 0v5L4 2.500Z" fill="#888" /></svg></button>
          <button aria-label="Letzte"><svg viewBox="0 0 6 5" className="h-[5px] w-[6px]"><path d="M5 0h1v5H5zM0 0v5L4 2.500Z" fill="#999" /></svg></button>
        </div>
        <button className="border border-t-0 border-[#d5d5d5] bg-white px-1">Fehler und Warnungen</button>
      </div>
    </section>
  );
}

const menus = ["Datei", "Bearbeiten", "Ansicht", "Einfügen", "Zuordnen", "Berechnen", "Ergebnisse", "Extras", "Optionen", "Fenster", "CAD-BIM", "Hilfe"];

export default function App() {
  return (
    <div className="flex min-h-screen w-full flex-col border border-[#8a8a8a] bg-[#f7f7f7] font-['Open_Sans','Noto_Sans',sans-serif] text-[7px] leading-[10px] text-[#222]">
      <header className="flex h-[19px] items-center bg-white pr-3 pl-1 text-[8px]">
        <svg viewBox="0 0 12 12" className="mr-[3px] size-[11px]"><path d="M4 1h5l3 3v5H5L2 7Z" fill="#284b86" /><circle cx="4" cy="8" r="3" fill="#9ab4dc" stroke="#284b86" /></svg>
        <h1 className="flex-1">Dlubal RFEM | 6.01.0009 | Model - Concrete Slab.rf6</h1>
        <div className="flex items-center gap-6">
          <button aria-label="Minimieren"><svg viewBox="0 0 8 8" className="block size-2"><path d="M1 4.500h7" stroke="#333" /></svg></button>
          <button aria-label="Maximieren"><svg viewBox="0 0 8 8" className="block size-2"><path d="M1 1h6v6H1Z" fill="none" stroke="#333" /></svg></button>
          <button aria-label="Schließen"><svg viewBox="0 0 8 8" className="block size-2"><path d="M1 1l6 6M7 1L1 7" stroke="#333" /></svg></button>
        </div>
      </header>

      <nav className="flex h-[14px] items-center gap-[7px]">
        <svg viewBox="0 0 10 8" className="-mr-[3px] h-2 w-[10px]"><path d="M0 0h10v8H0z" fill="#1f3270" /><path d="M2 3h8M0 5h7" stroke="#c8d4f0" /></svg>
        {menus.map((m) => <button key={m}>{m}</button>)}
      </nav>

      <div className="flex h-[18px] items-center pl-[2px]">
        <Grip />
        <Tool name="new" /><Tool name="open" /><Tool name="dCloud" /><Tool name="dCube" /><Tool name="props" /><Tool name="save" /><Tool name="print" /><Caret /><Tool name="report" />
        <Sep /><Tool name="undo" /><Caret /><Tool name="redo" /><Caret />
        <Sep /><Tool name="navTable" on /><Tool name="grid" on /><Tool name="legend" on /><Tool name="console" /><Tool name="script" /><Tool name="panel" />
        <Grip /><Tool name="swapNew" /><Tool name="swap" />
        <Combo label="Bemessungssituation" value="GZT (STR/GEO) - Ständ..." className="ml-[2px] flex-1 bg-[#e4f1fb] pl-0">
          <span className="w-[21px] bg-[#c55a5a] text-center leading-[9px] text-white">GZT</span>
          <span className="w-[37px]">BS1</span>
        </Combo>
        <Step dir="l" /><Step dir="r" />
        <Tool name="filterX" /><Caret />
        <Tool name="ptEye" /><Tool name="ptXxx" /><Tool name="loadEye" /><Tool name="loadXxx" /><Tool name="meshEye" /><Caret />
        <Tool name="resEye" on /><Tool name="resXxx" />
        <Sep /><Tool name="resWin" /><Tool name="abacus" /><Caret />
        <Grip /><Tool name="searchX" /><More />
      </div>

      <div className="flex h-[19px] items-center pl-[2px]">
        <Grip />
        <Tool name="poly1" /><Tool name="poly2" /><Tool name="poly3" /><Tool name="poly4" /><Tool name="poly5" />
        <Grip /><Tool name="node" /><Caret /><Tool name="line" /><Tool name="member" /><Caret /><Tool name="polyline" /><Caret />
        <Sep /><Tool name="support" /><Tool name="lineSup" /><Tool name="surfSup" />
        <span className="w-[5px]" />
        <Tool name="dim" /><Caret /><Tool name="dimXx" />
        <Sep /><Tool name="surface" /><Caret /><Tool name="opening" /><Caret /><Tool name="openRect" /><Caret /><Tool name="solid" /><Caret /><Tool name="cube" />
        <Sep /><Tool name="load" /><Tool name="lineLoad" /><Tool name="lineLoadOff" /><Tool name="surfLoad" /><Tool name="brush" /><Caret /><Tool name="lamp" /><Caret />
        <span className="w-1" />
        <Grip /><Tool name="filterWin" /><Sep /><Tool name="arch" /><Tool name="cable" />
        <span className="flex-1" />
        <More />
        <Grip />
        <Combo label="Koordinatensystem" value="1 - Global XYZ" className="w-[82px] bg-[#e7e7f4]">
          <span className="size-2 bg-[#c4fbfb]" />
        </Combo>
        <More />
        <Grip /><Tool name="plane" /><Caret /><More />
      </div>

      <div className="flex flex-1">
        <Navigator />
        <main className="flex min-w-0 flex-1 flex-col">
          <div className="relative flex flex-1 flex-col bg-white">
            <ModelView />
            <ControlPanel />
          </div>
          <ErrorPanel />
        </main>
      </div>

      <footer className="flex h-[14px] items-center border-t border-[#dcdcdc] pl-[185px]">
        {["FANG", "RASTER", "LRASTER", "OFANG"].map((s) => (
          <button key={s} className="mr-px h-3 border border-[#d4d4d4] bg-[#ececec] px-[2px]">{s}</button>
        ))}
        <span className="w-[70px] border-r border-[#ddd] pl-px">Sichtbarkeitsmodus</span>
        <span className="flex-1" />
        <span className="w-[106px] border-l border-[#ddd] pl-[2px]">KS: Global XYZ</span>
        <span className="w-[44px] border-l border-[#ddd] pl-[2px]">Ebene: XY</span>
        <span className="h-3 w-[51px] border-l border-[#ddd]" />
        <span className="h-3 w-[51px] border-l border-[#ddd]" />
        <span className="h-3 w-[51px] border-x border-[#ddd]" />
        <svg viewBox="0 0 8 8" className="ml-[2px] size-2"><path d="M7 1v1M5 3v1M7 3v1M3 5v1M5 5v1M7 5v1" stroke="#aaa" strokeWidth="1.300" /></svg>
      </footer>
    </div>
  );
}
